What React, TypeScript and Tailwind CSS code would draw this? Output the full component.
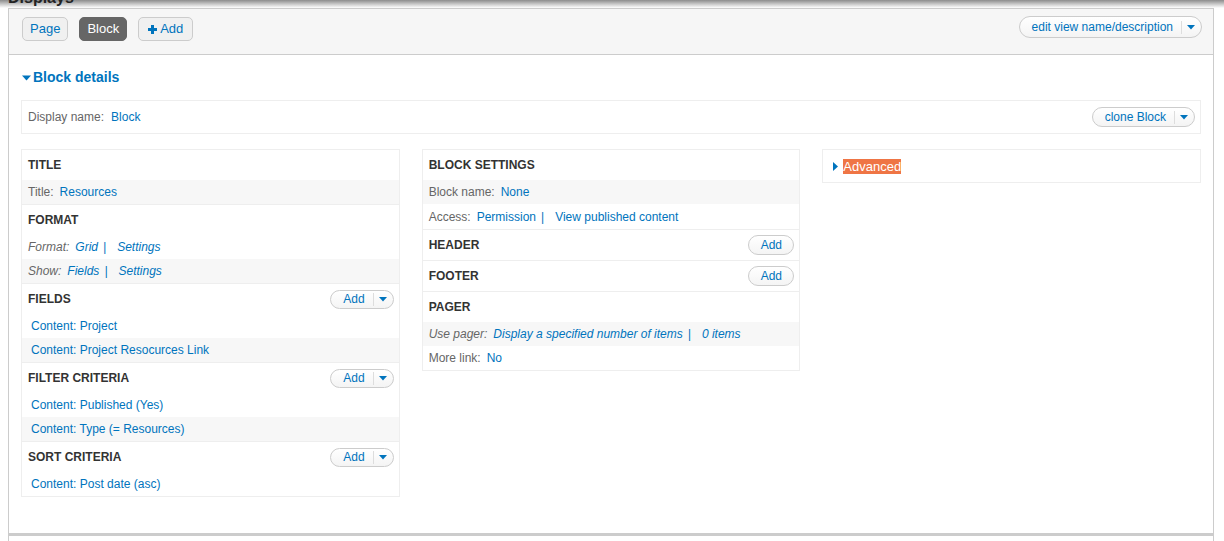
import React from 'react';

const BLUE = 'text-[#0074bd]';

type Row = {
  label?: string;
  links: string[];
  italic?: boolean;
  gray?: boolean;
  indent?: boolean;
  h?: string;
};

type Sec = {
  title: string;
  add?: 'drop' | 'plain';
  rows: Row[];
};

const Caret = () => (
  <svg width="8" height="5" viewBox="0 0 8 5" className="fill-[#0074bd]">
    <path d="M0 0h8L4 4.5z" />
  </svg>
);

const DropButton: React.FC<{ label: string; className?: string }> = ({ label, className }) => (
  <div
    className={`flex items-center rounded-full border border-[#ccc] bg-gradient-to-b from-white to-[#f4f4f4] ${BLUE} ${className ?? ''}`}
  >
    <span className="pl-[12px] pr-[8px]">{label}</span>
    <span className="h-[13px] w-px bg-[#ddd]" />
    <span className="flex items-center pl-[5px] pr-[6px]">
      <Caret />
    </span>
  </div>
);

const columns: Sec[][] = [
  [
    { title: 'Title', rows: [{ label: 'Title:', links: ['Resources'], gray: true }] },
    {
      title: 'Format',
      rows: [
        { label: 'Format:', links: ['Grid', 'Settings'], italic: true },
        { label: 'Show:', links: ['Fields', 'Settings'], italic: true, gray: true },
      ],
    },
    {
      title: 'Fields',
      add: 'drop',
      rows: [
        { links: ['Content: Project'], indent: true },
        { links: ['Content: Project Resocurces Link'], indent: true, gray: true },
      ],
    },
    {
      title: 'Filter criteria',
      add: 'drop',
      rows: [
        { links: ['Content: Published (Yes)'], indent: true },
        { links: ['Content: Type (= Resources)'], indent: true, gray: true },
      ],
    },
    {
      title: 'Sort criteria',
      add: 'drop',
      rows: [{ links: ['Content: Post date (asc)'], indent: true }],
    },
  ],
  [
    {
      title: 'Block settings',
      rows: [
        { label: 'Block name:', links: ['None'], gray: true },
        { label: 'Access:', links: ['Permission', 'View published content'], h: 'h-[25px]' },
      ],
    },
    { title: 'Header', add: 'plain', rows: [] },
    { title: 'Footer', add: 'plain', rows: [] },
    {
      title: 'Pager',
      rows: [
        { label: 'Use pager:', links: ['Display a specified number of items', '0 items'], italic: true, gray: true },
        { label: 'More link:', links: ['No'] },
      ],
    },
  ],
];

const SettingRow: React.FC<{ row: Row }> = ({ row }) => (
  <div
    className={`flex items-center ${row.h ?? 'h-6'} ${row.indent ? 'pl-[9px]' : 'pl-[6px]'} ${
      row.gray ? 'bg-[#f7f7f7]' : ''
    } ${row.italic ? 'italic' : ''}`}
  >
    {row.label && <span className="mr-[6px] text-[#666]">{row.label}</span>}
    {row.links.map((l, i) => (
      <React.Fragment key={l}>
        {i > 0 && <span className={`ml-[5px] mr-[11px] ${BLUE}`}>|</span>}
        <span className={BLUE}>{l}</span>
      </React.Fragment>
    ))}
  </div>
);

const Column: React.FC<{ sections: Sec[] }> = ({ sections }) => (
  <div className="self-start border border-[#eee] bg-white">
    {sections.map((s, i) => (
      <div key={s.title} className={i > 0 ? 'border-t border-[#eee]' : ''}>
        <div className="flex h-[30px] items-center justify-between pl-[6px] pr-[5px]">
          <span className="font-bold uppercase text-[#333]">{s.title}</span>
          {s.add === 'drop' && <DropButton label="Add" className="h-[19px]" />}
          {s.add === 'plain' && (
            <div className={`flex h-[20px] w-[46px] items-center justify-center rounded-full border border-[#ccc] bg-gradient-to-b from-white to-[#f4f4f4] ${BLUE}`}>
              Add
            </div>
          )}
        </div>
        {s.rows.map((r) => (
          <SettingRow key={r.links[0]} row={r} />
        ))}
      </div>
    ))}
  </div>
);

export default function App() {
  return (
    <div className="relative h-[541px] overflow-hidden bg-white font-['Liberation_Sans',Arial,sans-serif] text-[12px] text-[#333]">
      {/* heading scrolled mostly out of view, under the sticky bar's shadow */}
      <div className="pointer-events-none absolute inset-x-0 top-0 h-[8px] bg-gradient-to-b from-[#8c8c8c] via-[#c8c8c8] to-transparent" />
      <div className="relative h-2 overflow-hidden pl-2">
        <h2 className="-mt-[10px] text-[16px] font-bold leading-[16px] text-[#222]">Displays</h2>
      </div>

      <div className="ml-2 mr-[10px] border-x border-t border-[#ccc]">
        {/* display tabs */}
        <div className="flex h-[46px] items-start justify-between border-b border-[#ccc] bg-[#f6f6f6] pl-[13px] pr-[11px]">
          <div className="mt-[8px] flex gap-[11px] text-[13px]">
            <div className={`flex h-6 items-center rounded-[5px] border border-[#ccc] bg-[#f0f0f0] px-[7px] ${BLUE}`}>Page</div>
            <div className="flex h-6 items-center rounded-[5px] border border-[#666] bg-[#666] px-[7px] text-white">Block</div>
            <div className={`flex h-6 items-center gap-[3px] rounded-[5px] border border-[#ccc] bg-[#f0f0f0] px-[9px] ${BLUE}`}>
              <svg width="9" height="9" viewBox="0 0 9 9" className="fill-[#0074bd]">
                <path d="M3 0h3v3h3v3H6v3H3V6H0V3h3z" />
              </svg>
              Add
            </div>
          </div>
          <DropButton label="edit view name/description" className="mt-[7px] h-[22px]" />
        </div>

        {/* block details */}
        <div className="px-3 pb-[36px]">
          <div className={`mt-[12px] flex items-center text-[14px] font-bold ${BLUE}`}>
            <svg width="11" height="6" viewBox="0 0 11 6" className="mr-px fill-[#0074bd]">
              <path d="M1 0.5h9L5.5 5.5z" />
            </svg>
            Block details
          </div>

          <div className="mt-[12px] flex h-[34px] items-center justify-between border border-[#eee] pl-[6px] pr-[5px]">
            <div>
              <span className="text-[#666]">Display name:</span>
              <span className={`ml-[7px] ${BLUE}`}>Block</span>
            </div>
            <DropButton label="clone Block" className="h-[20px]" />
          </div>

          <div className="mt-[15px] grid grid-cols-3 items-start gap-[22px]">
            <Column sections={columns[0]} />
            <Column sections={columns[1]} />
            <div className="flex h-[34px] items-center border border-[#eee] pl-[10px]">
              <svg width="5" height="9" viewBox="0 0 5 9" className="mr-[5px] fill-[#0074bd]">
                <path d="M0 0l5 4.5L0 9z" />
              </svg>
              <span className="bg-[#ef7545] text-[13px] leading-[15px] text-white">Advanced</span>
            </div>
          </div>
        </div>
        <div className="border-b-[3px] border-[#ccc]" />
      </div>
      <div className="ml-2 mr-[10px] h-8 border-x border-[#ccc]" />
    </div>
  );
}
